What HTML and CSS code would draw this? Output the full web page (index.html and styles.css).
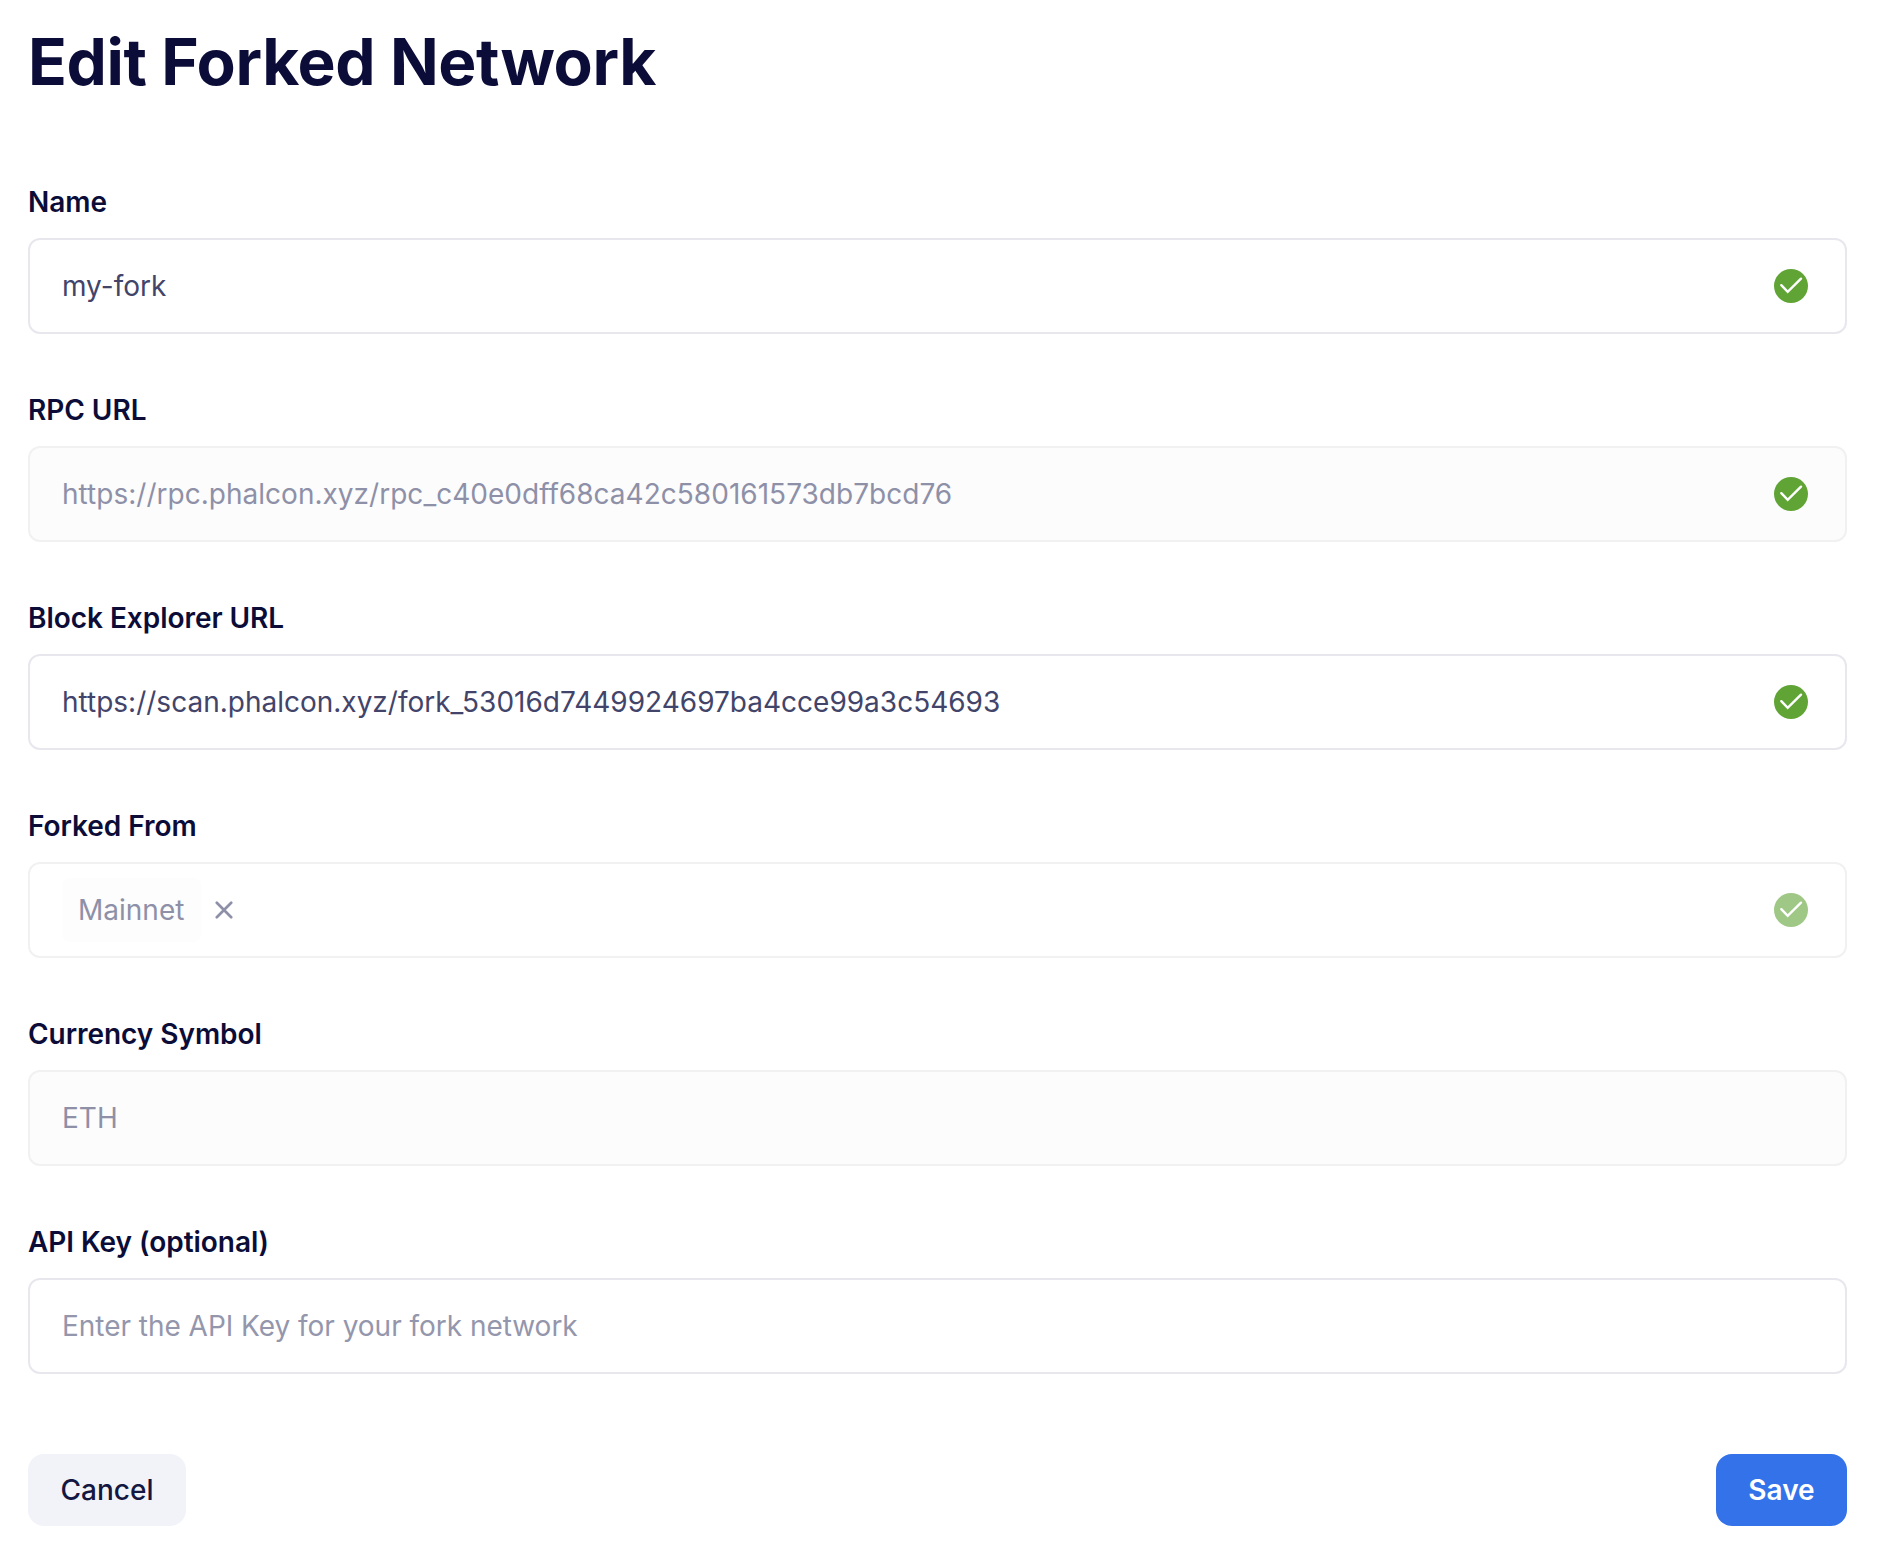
FILE: index.html
```html
<!DOCTYPE html>
<html lang="en">
<head>
<meta charset="utf-8">
<title>Edit Forked Network</title>
<link rel="stylesheet" href="styles.css">
</head>
<body>
<svg class="defs" width="0" height="0" aria-hidden="true">
  <symbol id="check" viewBox="0 0 34 34"><circle cx="17" cy="17" r="17" fill="#61a436"/><path d="M7.3 16.2l6.4 6.6L27 9.7" fill="none" stroke="#fff" stroke-width="2.4" stroke-linecap="round"/></symbol>
</svg>
<main class="page">
  <h1 class="title">Edit Forked Network</h1>
  <form class="form">
    <div class="field"><label class="label">Name</label>
      <div class="control"><span class="value">my-fork</span><svg class="check"><use href="#check"/></svg></div></div>
    <div class="field"><label class="label">RPC URL</label>
      <div class="control disabled"><span class="value url">https://rpc.phalcon.xyz/rpc_c40e0dff68ca42c580161573db7bcd76</span><svg class="check"><use href="#check"/></svg></div></div>
    <div class="field"><label class="label">Block Explorer URL</label>
      <div class="control"><span class="value">https://scan.phalcon.xyz/fork_53016d7449924697ba4cce99a3c54693</span><svg class="check"><use href="#check"/></svg></div></div>
    <div class="field"><label class="label">Forked From</label>
      <div class="control select"><span class="tag">Mainnet</span><svg class="remove" viewBox="0 0 18 18"><path d="M1.8 1.8l14.4 14.4M16.2 1.8L1.8 16.2"/></svg><svg class="check"><use href="#check"/></svg></div></div>
    <div class="field"><label class="label">Currency Symbol</label>
      <div class="control disabled"><span class="value">ETH</span></div></div>
    <div class="field"><label class="label">API Key (optional)</label>
      <div class="control"><span class="value placeholder">Enter the API Key for your fork network</span></div></div>
    <div class="actions"><button type="button" class="button cancel">Cancel</button><button type="button" class="button save">Save</button></div>
  </form>
</main>
</body>
</html>
```
FILE: styles.css
```css
* { box-sizing: border-box; }
body { margin: 0; background: #fff; color: #0b0d38; font-family: Inter, "Liberation Sans", sans-serif; }
.defs { position: absolute; }
.page { padding: 22px 35px 0 28px; }
.title { margin: 0; height: 80px; font-size: 64px; line-height: 80px; font-weight: 660; letter-spacing: -.38px; }
.form { padding-top: 80px; }
.field { height: 208px; }
.label { display: block; height: 56px; font-size: 28px; line-height: 40px; font-weight: 630; letter-spacing: -.04px; }
.control { display: flex; align-items: center; height: 96px; padding: 0 37px 0 32px; border: 2px solid #e8e7ee; border-radius: 12px; color: #42446a; font-size: 28px; }
.disabled { background: #fcfcfc; border-color: #f1f1f1; color: #8e90a8; }
.select { border-color: #f1f1f1; color: #8e90a8; }
.url { letter-spacing: .02px; }
.placeholder { color: #9496ac; letter-spacing: -.03px; }
.tag { width: 139px; height: 64px; padding-left: 16px; line-height: 64px; border-radius: 8px; background: #fdfdfd; }
.remove { width: 18px; height: 18px; margin-left: 14px; fill: none; stroke: #8e90a8; stroke-width: 2.7; stroke-linecap: round; }
.check { width: 34px; height: 34px; margin-left: auto; }
.select .check { opacity: .6; }
.actions { display: flex; justify-content: space-between; padding-top: 24px; }
.button { height: 72px; padding: 0; border: 0; border-radius: 16px; font: 500 28px/72px Inter, "Liberation Sans", sans-serif; }
.cancel { width: 158px; background: #f2f3f8; color: #141741; }
.save { width: 131px; background: #3472ea; color: #fff; font-weight: 600; }
```
